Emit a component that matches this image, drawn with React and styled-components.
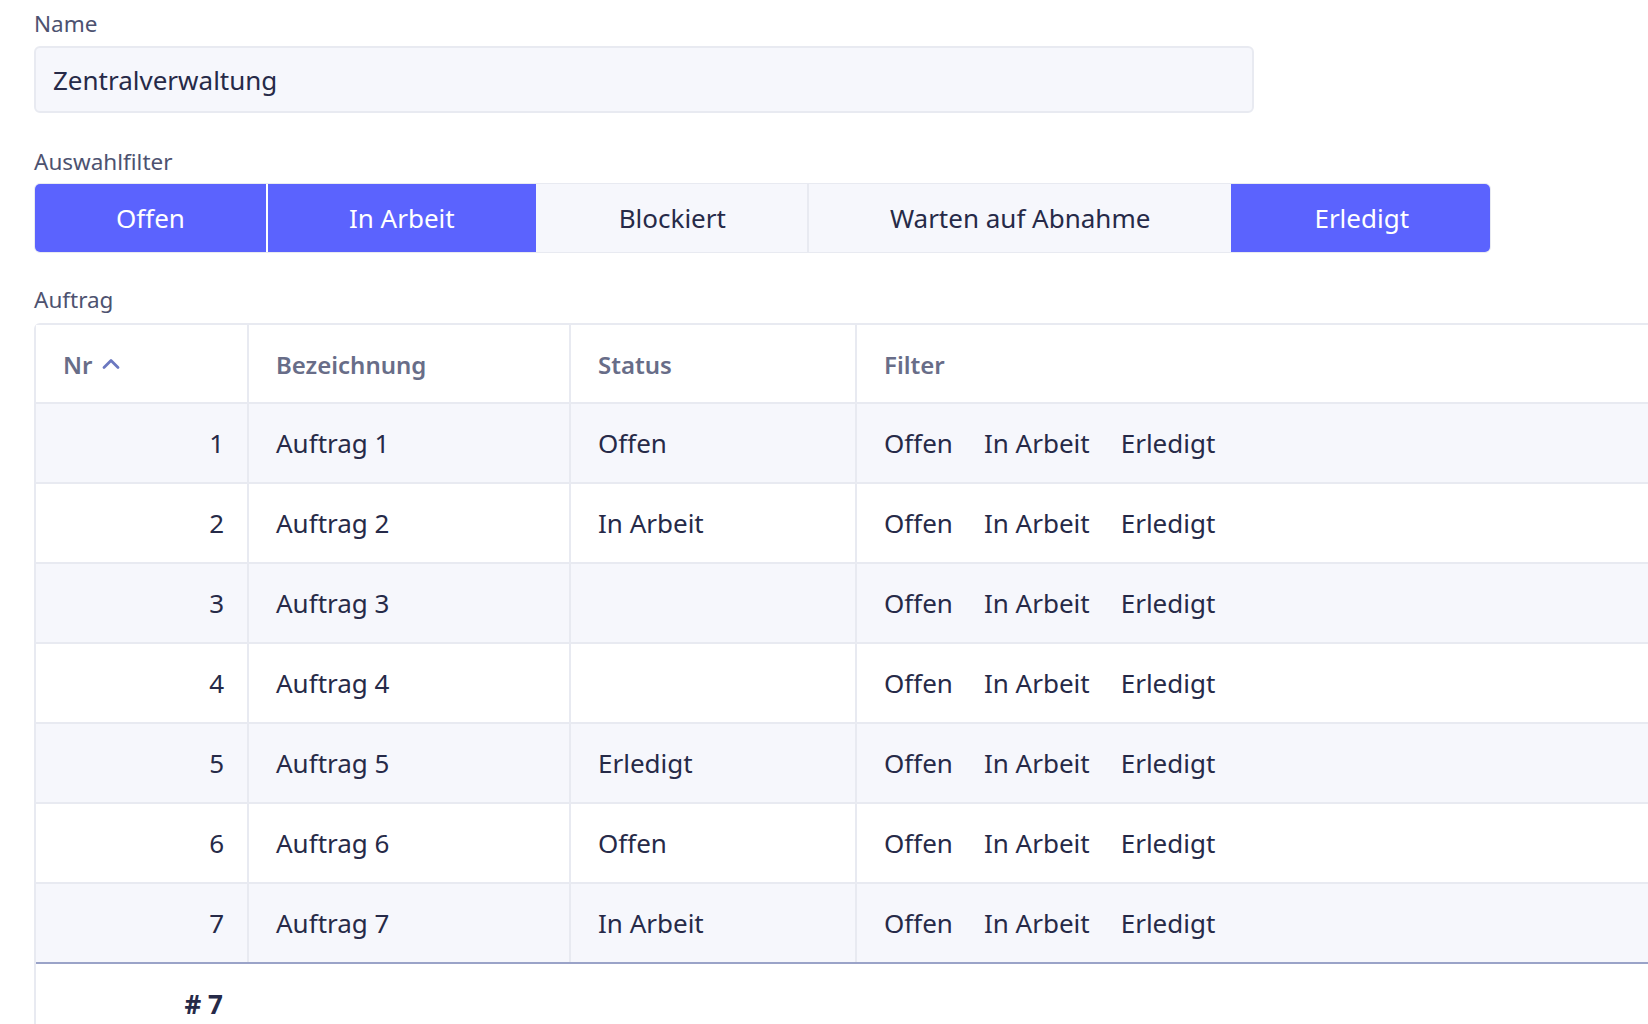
import React from "react";
import styled, { createGlobalStyle } from "styled-components";
import { ChevronUp } from "lucide-react";

const GlobalStyle = createGlobalStyle`
  body {
    margin: 0;
    background: #ffffff;
    font-family: "Noto Sans", "Open Sans", sans-serif;
    color: #262944;
    overflow: hidden;
  }
`;

const Page = styled.div`
  padding: 9px 0 0 34px;
  width: 1800px;
`;

const Field = styled.div`
  margin-bottom: ${(p) => p.$space || "34px"};
`;

const Label = styled.div`
  font-size: 22.5px;
  line-height: 30px;
  color: #4d5270;
  margin-bottom: ${(p) => p.$gap || "8px"};
`;

const Input = styled.input`
  box-sizing: border-box;
  width: 1220px;
  height: 67px;
  padding: 0 17px;
  border: 2px solid #e8eaf1;
  border-radius: 6px;
  background: #f6f7fc;
  font-family: inherit;
  font-size: 26px;
  color: #262a48;
  outline: none;
`;

const Toggle = styled.div`
  display: inline-flex;
  height: 70px;
  border-radius: 6px;
  overflow: hidden;
  border: 1px solid #e8eaf1;
  box-sizing: border-box;
`;

const ToggleButton = styled.button`
  box-sizing: border-box;
  height: 100%;
  padding: 0 81px;
  border: none;
  border-left: 2px solid ${(p) => p.$sep};
  background: ${(p) => (p.$active ? "#5b63fe" : "#f6f7fc")};
  color: ${(p) => (p.$active ? "#ffffff" : "#262a48")};
  font-family: inherit;
  font-size: 26px;
  white-space: nowrap;
  cursor: pointer;

  &:first-child {
    border-left: none;
  }
`;

const Table = styled.div`
  width: 1720px;
  border: 2px solid #e8eaf1;
  border-radius: 6px;
`;

const Row = styled.div`
  display: grid;
  grid-template-columns: 213px 322px 286px 1fr;
  height: ${(p) => (p.$head ? "78.5px" : "80px")};
  box-sizing: border-box;
  border-bottom: 2px solid ${(p) => (p.$last ? "#9aa3c8" : "#e8eaf1")};
  background: ${(p) => (p.$shaded ? "#f6f7fc" : "#ffffff")};
`;

const Cell = styled.div`
  display: flex;
  align-items: center;
  justify-content: ${(p) => (p.$right ? "flex-end" : "flex-start")};
  padding: 0 ${(p) => (p.$right ? "23px" : "27px")} 0 ${(p) => (p.$right ? "0" : "27px")};
  border-right: 2px solid #e8eaf1;
  font-size: 26px;
  color: #262a48;
  white-space: nowrap;

  &:last-child {
    border-right: none;
  }
`;

const HeadCell = styled(Cell)`
  font-size: 24px;
  font-weight: 600;
  color: #686d88;
  padding-top: 2px;
`;

const SortIcon = styled(ChevronUp)`
  margin-left: 5px;
  color: #6b78c0;
`;

const FilterLinks = styled.div`
  display: flex;
  gap: 31px;
`;

const Footer = styled.div`
  display: grid;
  grid-template-columns: 213px 1fr;
  height: 80px;
`;

const FooterCell = styled.div`
  display: flex;
  align-items: center;
  justify-content: flex-end;
  padding: 0 26px 0 0;
  font-size: 26px;
  font-weight: 700;
  color: #262a48;
`;

const filters = [
  { label: "Offen", active: true },
  { label: "In Arbeit", active: true },
  { label: "Blockiert", active: false },
  { label: "Warten auf Abnahme", active: false },
  { label: "Erledigt", active: true },
];

const orders = [
  { nr: 1, name: "Auftrag 1", status: "Offen" },
  { nr: 2, name: "Auftrag 2", status: "In Arbeit" },
  { nr: 3, name: "Auftrag 3", status: "" },
  { nr: 4, name: "Auftrag 4", status: "" },
  { nr: 5, name: "Auftrag 5", status: "Erledigt" },
  { nr: 6, name: "Auftrag 6", status: "Offen" },
  { nr: 7, name: "Auftrag 7", status: "In Arbeit" },
];

function App() {
  return (
    <Page>
      <GlobalStyle />
      <Field $space="34px">
        <Label $gap="7px">Name</Label>
        <Input defaultValue="Zentralverwaltung" />
      </Field>

      <Field $space="32px">
        <Label $gap="6px">Auswahlfilter</Label>
        <Toggle>
          {filters.map((f, i) => {
            const prev = filters[i - 1];
            let sep = "transparent";
            if (prev && prev.active && f.active) sep = "#ffffff";
            if (prev && !prev.active && !f.active) sep = "#e8eaf1";
            if (prev && prev.active !== f.active) sep = f.active ? "#5b63fe" : "#f6f7fc";
            return (
              <ToggleButton key={f.label} $active={f.active} $sep={sep}>
                {f.label}
              </ToggleButton>
            );
          })}
        </Toggle>
      </Field>

      <Field>
        <Label>Auftrag</Label>
        <Table>
          <Row $head>
            <HeadCell>
              Nr
              <SortIcon size={28} strokeWidth={2.4} />
            </HeadCell>
            <HeadCell>Bezeichnung</HeadCell>
            <HeadCell>Status</HeadCell>
            <HeadCell>Filter</HeadCell>
          </Row>
          {orders.map((o, i) => (
            <Row key={o.nr} $shaded={i % 2 === 0} $last={i === orders.length - 1}>
              <Cell $right>{o.nr}</Cell>
              <Cell>{o.name}</Cell>
              <Cell>{o.status}</Cell>
              <Cell>
                <FilterLinks>
                  <span>Offen</span>
                  <span>In Arbeit</span>
                  <span>Erledigt</span>
                </FilterLinks>
              </Cell>
            </Row>
          ))}
          <Footer>
            <FooterCell># 7</FooterCell>
            <div />
          </Footer>
        </Table>
      </Field>
    </Page>
  );
}

export default App;
